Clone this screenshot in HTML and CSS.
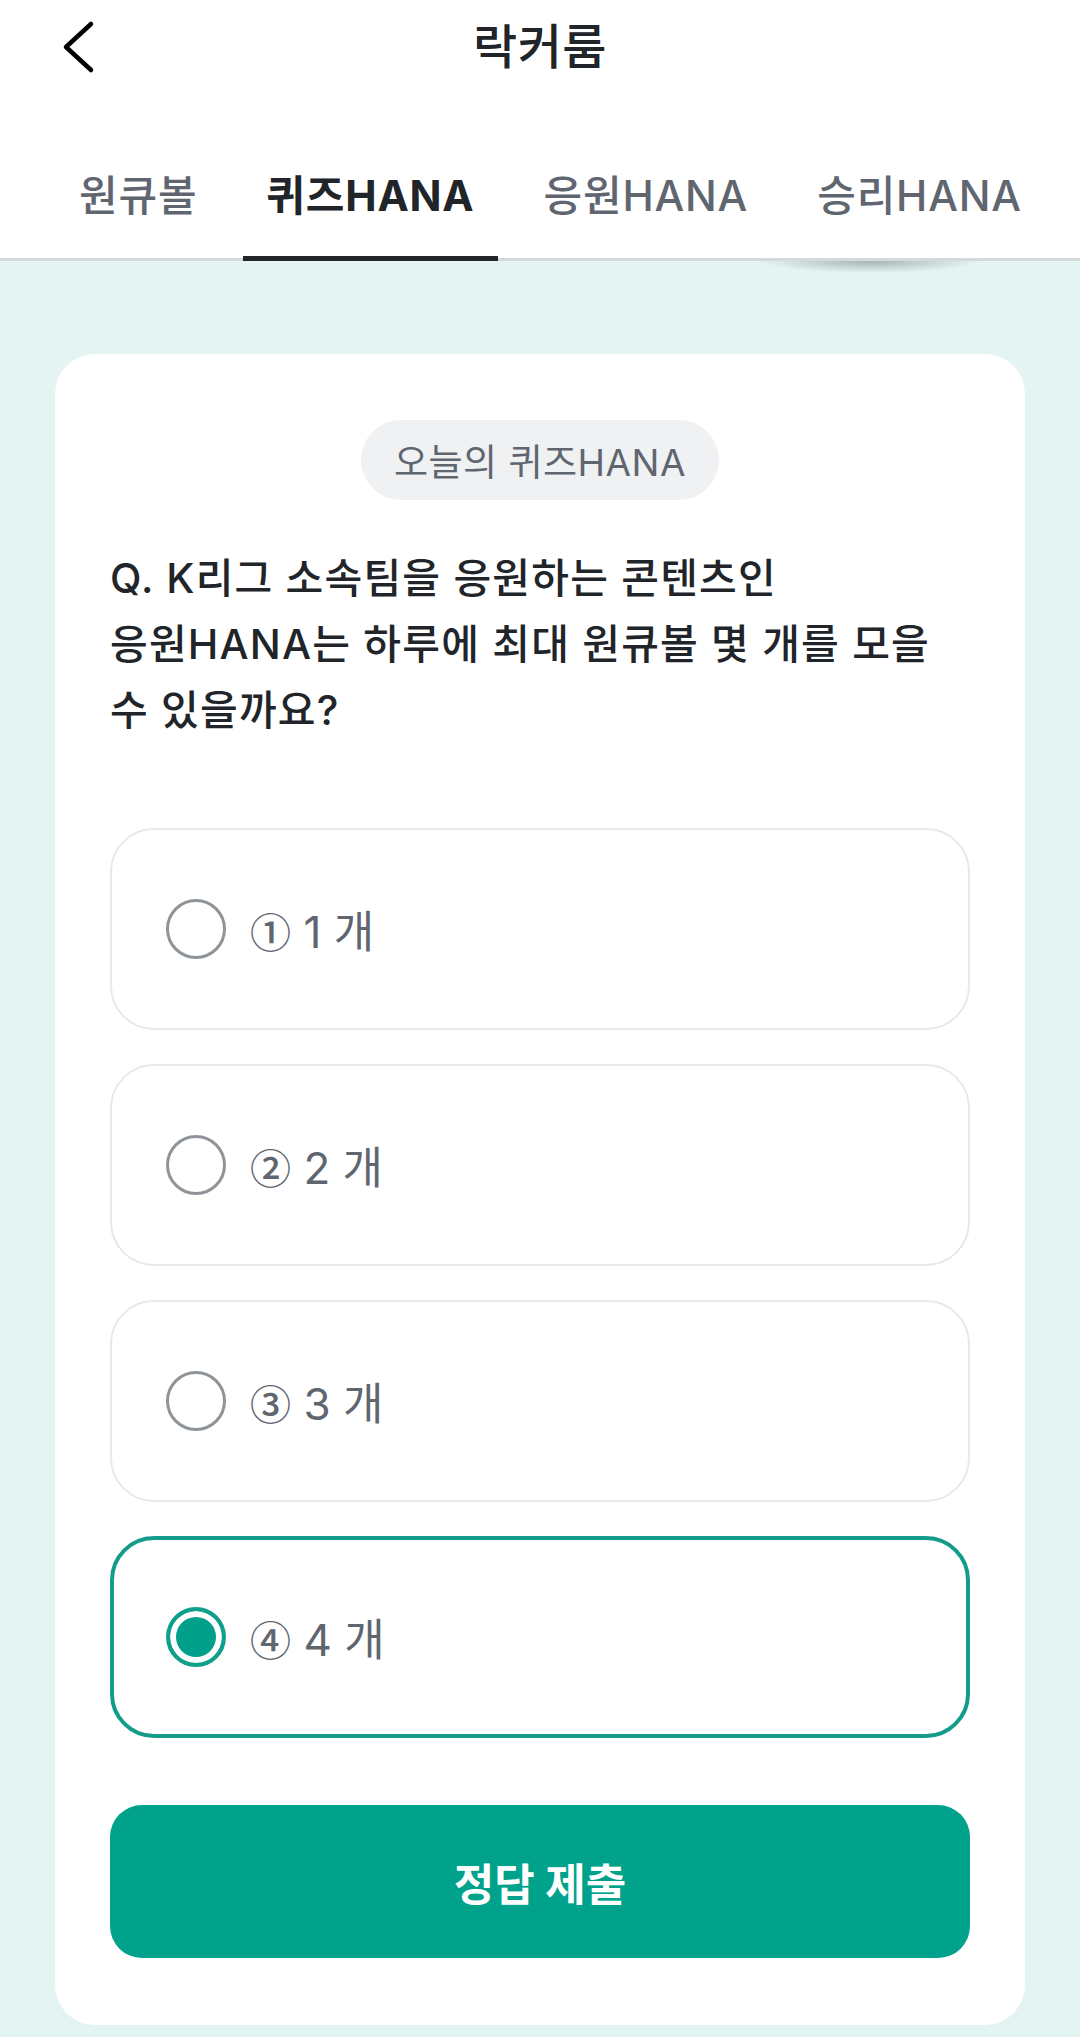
FILE: index.html
```html
<!DOCTYPE html>
<html lang="ko">
<head>
<meta charset="utf-8">
<title>락커룸</title>
<link rel="stylesheet" href="styles.css">
</head>
<body>
<header class="header">
  <div class="topbar">
    <button class="back" aria-label="뒤로">
      <svg width="40" height="56" viewBox="0 0 40 56"><path d="M32 5 L7 28 L32 51" fill="none" stroke="#000" stroke-width="4.5" stroke-linecap="round" stroke-linejoin="round"/></svg>
    </button>
    <h1 class="title">락커룸</h1>
    <span class="spacer"></span>
  </div>
  <nav class="tabs">
    <a class="tab">원큐볼</a>
    <a class="tab active">퀴즈HANA</a>
    <a class="tab">응원HANA</a>
    <a class="tab">승리HANA</a>
  </nav>
  <div class="scroll-shadow"></div>
</header>
<main class="content">
  <section class="card">
    <div class="badge">오늘의 퀴즈HANA</div>
    <p class="question">Q. K리그 소속팀을 응원하는 콘텐츠인<br>응원HANA는 하루에 최대 원큐볼 몇 개를 모을<br>수 있을까요?</p>
    <ul class="options">
      <li class="option"><span class="radio"></span><span class="label"><span class="num">①</span> 1 개</span></li>
      <li class="option"><span class="radio"></span><span class="label"><span class="num">②</span> 2 개</span></li>
      <li class="option"><span class="radio"></span><span class="label"><span class="num">③</span> 3 개</span></li>
      <li class="option selected"><span class="radio"></span><span class="label"><span class="num">④</span> 4 개</span></li>
    </ul>
    <button class="submit">정답 제출</button>
  </section>
</main>
</body>
</html>
```
FILE: styles.css
```css
* { box-sizing: border-box; }
html, body { margin: 0; padding: 0; }
body {
  width: 1080px;
  min-height: 2037px;
  background: #e3f4f3;
  font-family: Inter, "Noto Sans CJK KR", sans-serif;
  color: #212529;
}
.header {
  position: relative;
  background: #fff;
}
.topbar {
  height: 94px;
  display: grid;
  grid-template-columns: 1fr auto 1fr;
  align-items: center;
}
.back {
  justify-self: start;
  margin-left: 59px;
  padding: 0;
  border: none;
  background: none;
  width: 40px;
  height: 56px;
  display: flex;
}
.title {
  margin: 0;
  font-size: 48px;
  letter-spacing: 0.5px;
  font-weight: 500;
  line-height: 94px;
  color: #212529;
}
.tabs {
  height: 167px;
  display: flex;
  align-items: flex-end;
  gap: 23px;
  padding-left: 56px;
  border-bottom: 3px solid #d6d9dc;
}
.tab {
  position: relative;
  padding: 0 23px 38px;
  font-size: 42px;
  letter-spacing: 0.8px;
  line-height: 48px;
  font-weight: 500;
  color: #5f6670;
  white-space: nowrap;
}
.tab.active {
  font-weight: 700;
  color: #212529;
}
.tab.active::after {
  content: "";
  position: absolute;
  left: 0;
  right: 0;
  bottom: -3px;
  height: 5px;
  background: #212529;
}
.scroll-shadow {
  position: absolute;
  left: 760px;
  top: 261px;
  width: 220px;
  height: 12px;
  background: radial-gradient(ellipse 50% 100% at 50% 0, rgba(90,100,100,0.45), rgba(90,100,100,0) 100%);
}
.content {
  padding: 93px 55px 12px;
}
.card {
  background: #fff;
  border-radius: 40px;
  padding: 66px 55px 67px;
}
.badge {
  display: flex;
  align-items: center;
  width: fit-content;
  height: 80px;
  margin: 0 auto;
  padding: 0 33px;
  border-radius: 40px;
  background: #eff1f3;
  color: #5f6670;
  font-size: 37px;
  letter-spacing: 0.5px;
  white-space: nowrap;
}
.question {
  margin: 45px 0 0;
  font-size: 41px;
  letter-spacing: 1.2px;
  line-height: 66px;
  font-weight: 500;
  color: #212529;
  white-space: nowrap;
}
.options {
  list-style: none;
  margin: 85px 0 0;
  padding: 0;
  display: flex;
  flex-direction: column;
  gap: 34px;
}
.option {
  height: 202px;
  border: 2px solid #e6e8ea;
  border-radius: 44px;
  display: flex;
  align-items: center;
  padding-left: 54px;
}
.option.selected {
  border: 4px solid #149c8a;
  padding-left: 52px;
}
.radio {
  width: 60px;
  height: 60px;
  flex: none;
  border-radius: 50%;
  border: 3.5px solid #8f9499;
}
.option.selected .radio {
  border: 4px solid #0fa08b;
  background: #00a08a;
  box-shadow: inset 0 0 0 6px #fff;
}
.label {
  margin-left: 24px;
  font-size: 44px;
  color: #5f6670;
  white-space: nowrap;
}
.num {
  font-family: "Noto Sans CJK KR", sans-serif;
  font-size: 41px;
  font-weight: 500;
}
.submit {
  display: block;
  width: 100%;
  height: 153px;
  margin-top: 67px;
  border: none;
  border-radius: 32px;
  background: #00a28c;
  color: #fff;
  font-family: inherit;
  font-size: 44px;
  font-weight: 700;
}
```
